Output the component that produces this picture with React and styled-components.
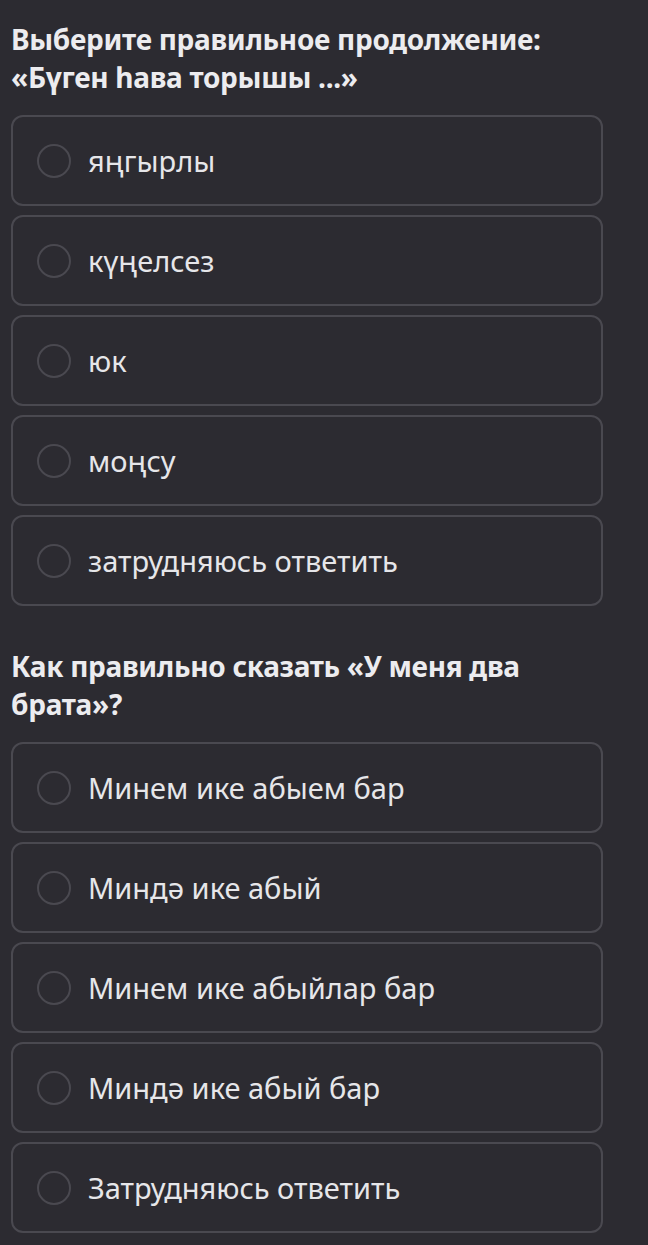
import styled, { createGlobalStyle } from "styled-components";

const GlobalStyle = createGlobalStyle`
  html, body {
    margin: 0;
    padding: 0;
    background: #2c2b31;
  }
  body {
    font-family: "Noto Sans", "Open Sans", sans-serif;
    color: #e9e9ec;
  }
`;

const Page = styled.div`
  padding: 20px 45px 11px 11px;
  display: flex;
  flex-direction: column;
  gap: 41px;
`;

const Question = styled.section`
  display: flex;
  flex-direction: column;
  gap: 19px;
`;

const Title = styled.h2`
  margin: 0;
  font-size: 28px;
  line-height: 38px;
  font-weight: 700;
  letter-spacing: -0.3px;
  color: #ececef;
`;

const Options = styled.div`
  display: flex;
  flex-direction: column;
  gap: 9px;
`;

const Option = styled.label`
  height: 91px;
  box-sizing: border-box;
  border: 2px solid #4a4950;
  border-radius: 12px;
  display: flex;
  align-items: center;
  padding-left: 24px;
  gap: 17px;
  cursor: pointer;
`;

const Radio = styled.span`
  width: 34px;
  height: 34px;
  box-sizing: border-box;
  border: 2px solid #4a4950;
  border-radius: 50%;
  flex-shrink: 0;
`;

const OptionText = styled.span`
  font-size: 29px;
  color: #e6e6e9;
`;

const questions = [
  {
    title: "Выберите правильное продолжение: «Бүген һава торышы ...»",
    options: ["яңгырлы", "күңелсез", "юк", "моңсу", "затрудняюсь ответить"],
  },
  {
    title: "Как правильно сказать «У меня два брата»?",
    options: [
      "Минем ике абыем бар",
      "Миндә ике абый",
      "Минем ике абыйлар бар",
      "Миндә ике абый бар",
      "Затрудняюсь ответить",
    ],
  },
];

export default function App() {
  return (
    <>
      <GlobalStyle />
      <Page>
        {questions.map((q) => (
          <Question key={q.title}>
            <Title>{q.title}</Title>
            <Options>
              {q.options.map((o) => (
                <Option key={o}>
                  <Radio />
                  <OptionText>{o}</OptionText>
                </Option>
              ))}
            </Options>
          </Question>
        ))}
      </Page>
    </>
  );
}
